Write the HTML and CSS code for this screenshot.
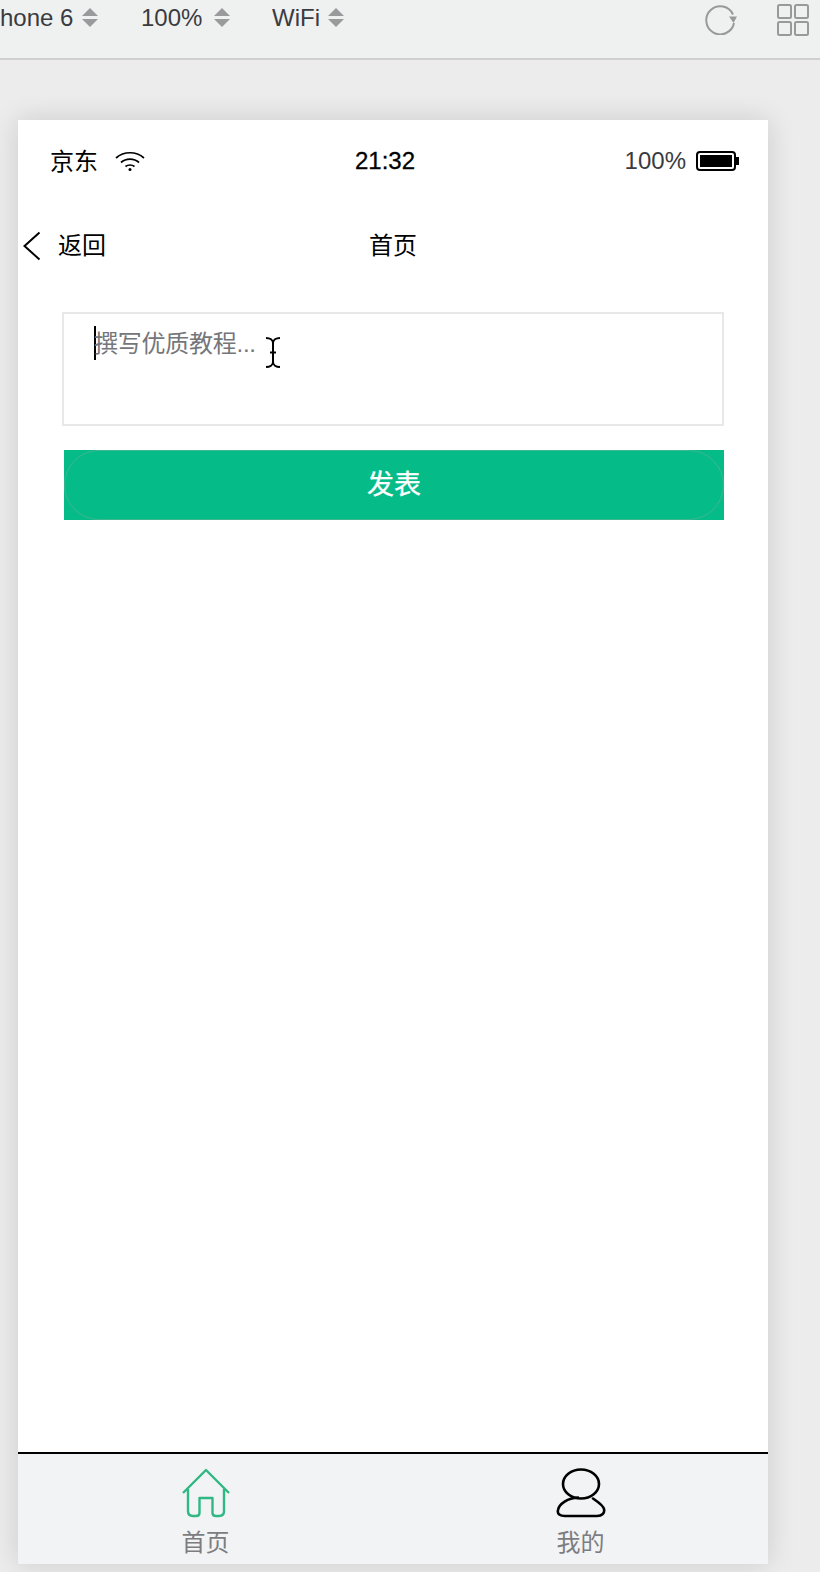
FILE: index.html
```html
<!DOCTYPE html>
<html lang="zh-CN">
<head>
    <meta charset="UTF-8">
    <meta name="viewport" content="width=device-width, initial-scale=1.0">
    <title>首页</title>
    <link rel="stylesheet" href="styles.css">
</head>
<body>
    <!-- Simulator toolbar -->
    <div class="toolbar">
        <div class="device-picks">
            <div class="pick pick-device">hone 6 <span class="updown"></span></div>
            <div class="pick pick-zoom">100% <span class="updown"></span></div>
            <div class="pick pick-net">WiFi <span class="updown"></span></div>
        </div>
        <div class="toolbar-icons">
            <svg class="icon-rotate" width="34" height="32" viewBox="0 0 34 32">
                <path d="M29 11.500A14 14 0 1 0 30 20" fill="none" stroke="#999" stroke-width="2"/>
                <path d="M25 13.500L33 13.500L29.500 20Z" fill="#999"/>
            </svg>
            <svg class="icon-grid" width="34" height="34" viewBox="0 0 34 34">
                <rect x="2" y="2" width="13" height="13" rx="1.500"/>
                <rect x="19" y="2" width="13" height="13" rx="1.500"/>
                <rect x="2" y="19" width="13" height="13" rx="1.500"/>
                <rect x="19" y="19" width="13" height="13" rx="1.500"/>
            </svg>
        </div>
    </div>

    <div class="phone">
        <div class="status-bar">
            <div class="status-left">
                <span class="carrier">京东</span>
                <svg class="icon-wifi" width="30" height="20" viewBox="0 0 30 20">
                    <path d="M1 7C9 0 21 0 29 7M6 11.500C11 7 19 7 24 11.500M10.500 15.500C13 13.500 17 13.500 19.500 15.500" fill="none" stroke="#000" stroke-width="1.700"/>
                    <circle cx="15" cy="18.500" r="1.500" fill="#000"/>
                </svg>
            </div>
            <div class="status-time">21:32</div>
            <div class="status-right">
                <span class="battery-text">100%</span>
                <div class="battery"><div class="battery-fill"></div></div>
            </div>
        </div>

        <div class="nav-bar">
            <div class="nav-back">
                <svg width="20" height="30" viewBox="0 0 20 30">
                    <path d="M17.500 1.500L2.500 15L17.500 28.500" fill="none" stroke="#000" stroke-width="2"/>
                </svg>
                <span class="nav-label">返回</span>
            </div>
            <div class="nav-title"><span class="nav-label">首页</span></div>
        </div>

        <div class="content">
            <div class="editor">
                <span class="caret"></span>
                <span class="placeholder">撰写优质教程...</span>
                <svg class="ibeam" width="14" height="31" viewBox="0 0 14 31">
                    <path d="M0 1C4 1 7 3 7 6L7 25C7 28 4 30 0 30M14 1C10 1 7 3 7 6M7 25C7 28 10 30 14 30M4 15.500L10 15.500" fill="none" stroke="#000" stroke-width="2"/>
                </svg>
            </div>
            <div class="publish-btn">发表</div>
        </div>

        <div class="tab-bar">
            <div class="tab">
                <svg width="50" height="50" viewBox="0 0 50 50">
                    <path d="M2 25L25 2L48 25M7 21L7 43Q7 48 12 48L15 48Q18.500 48 18.500 45L18.500 30L31.500 30L31.500 45Q31.500 48 35 48L38 48Q43 48 43 43L43 21" fill="none" stroke="#2fb883" stroke-width="2.400" stroke-linejoin="round"/>
                </svg>
                <span class="tab-label">首页</span>
            </div>
            <div class="tab">
                <svg width="50" height="50" viewBox="0 0 50 50">
                    <ellipse cx="25" cy="16" rx="18" ry="14.500" fill="none" stroke="#000" stroke-width="2.600"/>
                    <path d="M22 29.500C12 30 3 36 2 42C1 46 4 48 9 48L41 48C46 48 49 45 48 41C47 37 42 34 37 30.500" fill="none" stroke="#000" stroke-width="2.600" stroke-linecap="round"/>
                </svg>
                <span class="tab-label">我的</span>
            </div>
        </div>
    </div>
</body>
</html>
```

FILE: styles.css
```css
* {
    margin: 0;
    padding: 0;
    box-sizing: border-box;
}

body {
    background: #ececec;
    font-family: "Liberation Sans", "Noto Sans CJK SC", sans-serif;
    height: 1572px;
    overflow: hidden;
}

.toolbar {
    height: 60px;
    background: #eff1f1;
    border-bottom: 2px solid #cfcfcf;
    display: flex;
    justify-content: space-between;
    color: #3a3b40;
    font-size: 24px;
}

.device-picks {
    display: flex;
    padding-top: 3px;
}

.pick {
    display: flex;
    gap: 9px;
    height: 30px;
    line-height: 30px;
}

.pick-device { width: 141px; }
.pick-zoom { width: 131px; gap: 12px; }
.pick-net { gap: 8px; }

.updown {
    width: 16px;
    margin-top: 5px;
    height: 19px;
    position: relative;
}

.updown::before,
.updown::after {
    content: "";
    position: absolute;
    left: 0;
    border-left: 8px solid transparent;
    border-right: 8px solid transparent;
}

.updown::before {
    top: 0;
    border-bottom: 8px solid #9a9a9c;
}

.updown::after {
    bottom: 0;
    border-top: 8px solid #9a9a9c;
}

.toolbar-icons {
    display: flex;
    gap: 38px;
    padding: 3px 10px 0 0;
}

.icon-grid rect {
    fill: none;
    stroke: #999;
    stroke-width: 2;
}

.phone {
    margin: 60px 0 0 18px;
    width: 750px;
    height: 1444px;
    background: #fff;
    box-shadow: 0 0 26px rgba(0, 0, 0, 0.14);
    display: flex;
    flex-direction: column;
}

.status-bar {
    height: 82px;
    display: flex;
    align-items: center;
    justify-content: space-between;
    padding: 0 32px;
    font-size: 24px;
    color: #000;
    position: relative;
}

.status-left {
    display: flex;
    align-items: center;
    gap: 17px;
}

.carrier { margin-bottom: 4px; }

.status-time {
    position: absolute;
    left: 0;
    right: 0;
    text-align: center;
    padding-right: 16px;
    -webkit-text-stroke: 0.3px #000;
}

.status-right {
    display: flex;
    align-items: center;
    gap: 10px;
}

.battery-text { color: #3a3b40; }

.battery {
    width: 40px;
    height: 20px;
    border: 2px solid #000;
    border-radius: 4px;
    padding: 2px;
    position: relative;
}

.battery::after {
    content: "";
    position: absolute;
    right: -5px;
    top: 4px;
    width: 3px;
    height: 8px;
    background: #000;
}

.battery-fill {
    height: 100%;
    background: #000;
}

.nav-bar {
    height: 88px;
    display: flex;
    align-items: center;
    position: relative;
    font-size: 24px;
    color: #000;
    padding-left: 4px;
}

.nav-back {
    display: flex;
    align-items: center;
    gap: 16px;
}

.nav-label {
    display: block;
    margin-bottom: 6px;
}

.nav-title {
    position: absolute;
    left: 0;
    right: 0;
    text-align: center;
}

.content {
    flex: 1;
    padding: 22px 44px 0 44px;
}

.editor {
    height: 114px;
    border: 2px solid #e8e8e8;
    padding: 12px 0 0 30px;
    display: flex;
    position: relative;
    font-size: 24px;
    color: #75767a;
}

.caret {
    width: 2px;
    height: 34px;
    background: #000;
}

.placeholder {
    line-height: 36px;
    margin-left: -2px;
    letter-spacing: -0.25px;
}

.ibeam {
    position: absolute;
    left: 202px;
    top: 23px;
}

.publish-btn {
    margin: 24px 0 0 2px;
    height: 70px;
    background: #05bc88;
    color: #fff;
    font-size: 27px;
    line-height: 70px;
    text-align: center;
    position: relative;
    -webkit-text-stroke: 0.3px #fff;
}

.publish-btn::after {
    content: "";
    position: absolute;
    inset: 0;
    border: 1px solid rgba(150, 170, 160, 0.4);
    border-radius: 35px;
}

.tab-bar {
    height: 112px;
    border-top: 2px solid #000;
    background: #f2f3f5;
    display: flex;
}

.tab {
    flex: 1;
    display: flex;
    flex-direction: column;
    align-items: center;
    padding-top: 14px;
    font-size: 24px;
    line-height: 36px;
    color: #7d7d7f;
}

.tab svg { display: block; }

.tab-label { margin-top: 7px; }
```
